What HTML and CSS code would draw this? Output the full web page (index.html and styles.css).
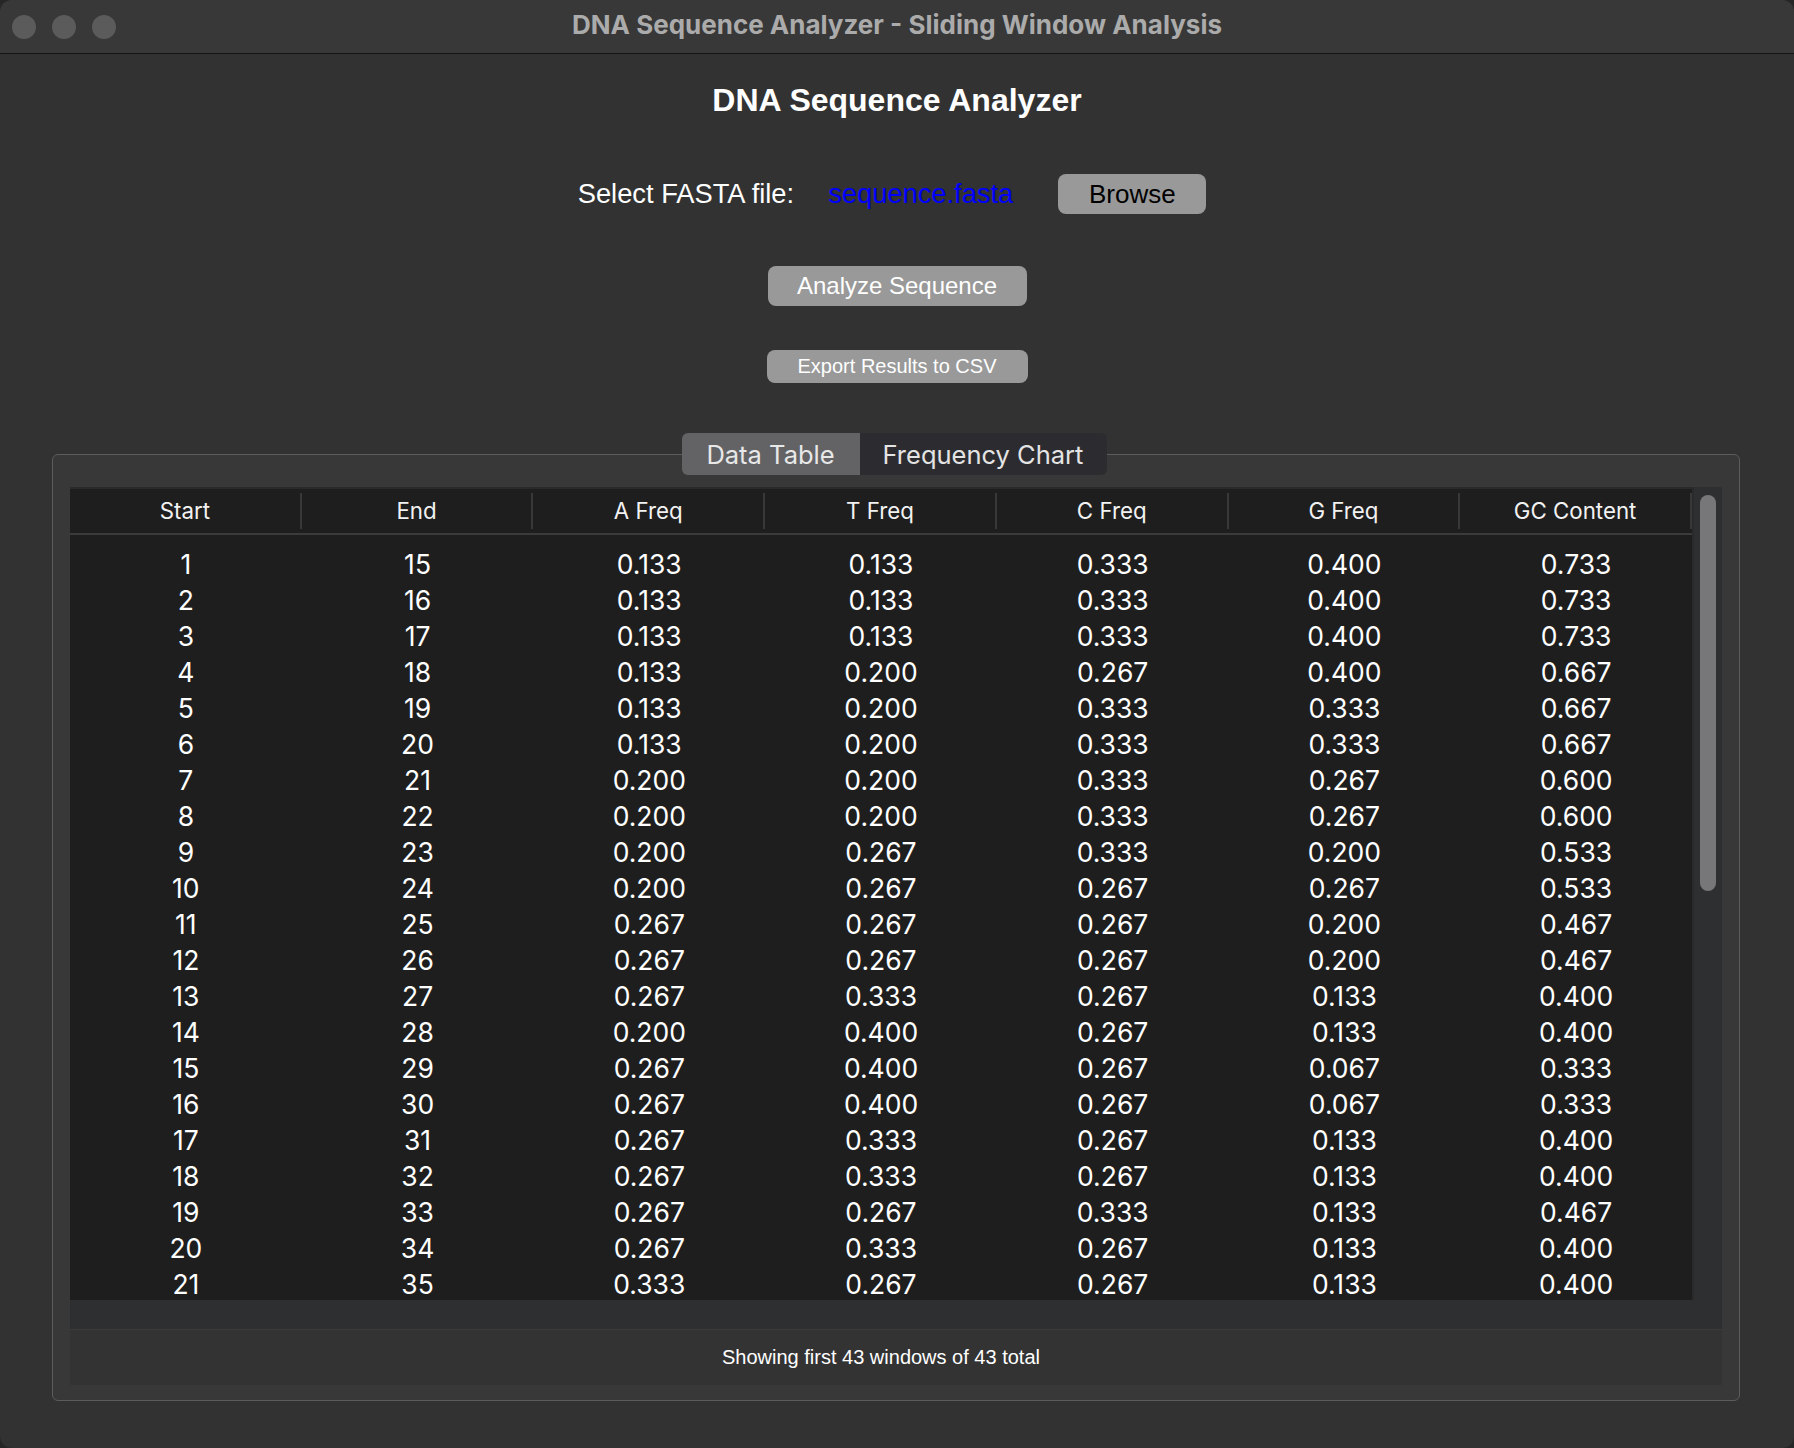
FILE: index.html
```html
<!DOCTYPE html>
<html>
<head>
<meta charset="utf-8">
<title>DNA Sequence Analyzer - Sliding Window Analysis</title>
<link rel="stylesheet" href="styles.css">
</head>
<body>
<div class="window">
  <div class="titlebar">
    <div class="lights"><span class="light"></span><span class="light"></span><span class="light"></span></div>
    <div class="wtitle">DNA Sequence Analyzer - Sliding Window Analysis</div>
    <div></div>
  </div>
  <div class="content">
    <h1 class="heading">DNA Sequence Analyzer</h1>
    <div class="filerow">
      <span class="lbl">Select FASTA file:</span>
      <span class="fname">sequence.fasta</span>
      <button class="btn browse">Browse</button>
    </div>
    <button class="btn analyze">Analyze Sequence</button>
    <button class="btn export">Export Results to CSV</button>
    <div class="notebook">
      <div class="tabs">
        <div class="tab active">Data Table</div>
        <div class="tab">Frequency Chart</div>
      </div>
      <div class="frame">
        <div class="treearea">
          <div class="tree">
            <div class="thead">
              <div class="th">Start</div><div class="th">End</div><div class="th">A Freq</div><div class="th">T Freq</div><div class="th">C Freq</div><div class="th">G Freq</div><div class="th">GC Content</div>
            </div>
            <div class="tbody" id="tbody"></div>
          </div>
          <div class="vscroll"><div class="thumb"></div></div>
        </div>
        <div class="hscroll"></div>
        <div class="status"><span class="statustext">Showing first 43 windows of 43 total</span></div>
      </div>
    </div>
  </div>
</div>
<script src="app.js"></script>
</body>
</html>
```

FILE: styles.css
```css
* { box-sizing: border-box; }
html, body { margin: 0; padding: 0; }
body {
  background: #262626;
  width: 1794px;
  height: 1448px;
  overflow: hidden;
}
.window {
  width: 1794px;
  height: 1448px;
  background: #323232;
  border-radius: 12px;
  overflow: hidden;
  display: flex;
  flex-direction: column;
}
.titlebar {
  height: 54px;
  flex: 0 0 54px;
  background: #383838;
  border-bottom: 1px solid #141414;
  display: grid;
  grid-template-columns: 1fr auto 1fr;
  align-items: center;
}
.lights {
  display: flex;
  gap: 16px;
  padding-left: 12px;
}
.light {
  width: 24px;
  height: 24px;
  border-radius: 50%;
  background: #5b5b5b;
}
.wtitle {
  font-family: Inter, "Liberation Sans", sans-serif;
  font-weight: 700;
  font-size: 26px;
  line-height: 30px;
  margin-bottom: 4px;
  color: #ababab;
  white-space: nowrap;
}
.content {
  display: flex;
  flex-direction: column;
  align-items: center;
}
.heading {
  margin: 28px 0 0 0;
  font-family: "Liberation Sans", Arial, sans-serif;
  font-weight: 700;
  font-size: 32px;
  line-height: 37px;
  color: #ffffff;
}
.filerow {
  margin-top: 55px;
  height: 40px;
  display: flex;
  align-items: center;
  font-family: "Liberation Sans", Arial, sans-serif;
  font-size: 27.3px;
  padding-right: 10px;
}
.lbl { color: #ffffff; }
.fname { color: #0000ff; margin-left: 34px; }
.btn {
  border: none;
  background: #999999;
  border-radius: 8px;
  font-family: "Liberation Sans", Arial, sans-serif;
  padding: 0;
  display: flex;
  align-items: center;
  justify-content: center;
}
.browse {
  margin-left: 45px;
  width: 148px;
  height: 40px;
  color: #000000;
  font-size: 26px;
}
.analyze {
  margin-top: 52px;
  width: 259px;
  height: 40px;
  color: #ffffff;
  font-size: 24px;
}
.export {
  margin-top: 44px;
  width: 261px;
  height: 33px;
  color: #ffffff;
  font-size: 20px;
}
.notebook {
  margin-top: 50px;
  align-self: stretch;
  padding: 0 54px 0 52px;
  display: flex;
  flex-direction: column;
  align-items: center;
}
.tabs {
  position: relative;
  z-index: 1;
  display: flex;
  height: 42px;
  margin-bottom: -21px;
  margin-left: -4px;
  border-radius: 6px;
  overflow: hidden;
  font-family: Inter, "Liberation Sans", sans-serif;
  font-size: 25.5px;
}
.tab {
  display: flex;
  align-items: center;
  justify-content: center;
  background: #2c2c30;
  color: #e4e4e4;
  width: 247px;
}
.tab.active {
  width: 178px;
  background: #636366;
  color: #e8e8e8;
}
.frame {
  align-self: stretch;
  background: #383838;
  border: 1px solid #5c5c5c;
  border-radius: 6px;
  padding: 32px 17px 15px 17px;
  display: flex;
  flex-direction: column;
}
.treearea {
  height: 813px;
  display: flex;
}
.tree {
  width: 1622px;
  background: #1e1e1e;
  border-top: 2px solid #2a2a2a;
  overflow: hidden;
  font-family: Inter, "Liberation Sans", sans-serif;
  color: #ffffff;
}
.thead {
  display: grid;
  grid-template-columns: repeat(7, 1fr);
  height: 46px;
  border-bottom: 2px solid #3b3b3b;
  align-items: center;
}
.th {
  text-align: center;
  font-size: 22.3px;
  color: #f2f2f2;
  height: 36px;
  line-height: 36px;
  border-right: 2px solid #383838;
}
.tbody {
  padding-top: 11px;
}
.row {
  display: grid;
  grid-template-columns: repeat(7, 1fr);
  height: 36px;
  align-items: center;
}
.td {
  text-align: center;
  font-size: 26.5px;
  line-height: 36px;
}
.vscroll {
  width: 30px;
  background: #2e2f31;
  border-left: 2px solid #2a2a2a;
  padding: 8px 6px 0 6px;
}
.thumb {
  width: 16px;
  height: 396px;
  border-radius: 8px;
  background: #77777a;
}
.hscroll {
  height: 30px;
  background: #2e2f31;
  border-bottom: 1px solid #3a3a3a;
}
.status {
  height: 55px;
  background: #333333;
  display: flex;
  align-items: center;
  padding-right: 30px;
  justify-content: center;
  font-family: "Liberation Sans", Arial, sans-serif;
  font-size: 20px;
  color: #ffffff;
}
```

FILE: app.js
```js
const data = [
[1,15,"0.133","0.133","0.333","0.400","0.733"],
[2,16,"0.133","0.133","0.333","0.400","0.733"],
[3,17,"0.133","0.133","0.333","0.400","0.733"],
[4,18,"0.133","0.200","0.267","0.400","0.667"],
[5,19,"0.133","0.200","0.333","0.333","0.667"],
[6,20,"0.133","0.200","0.333","0.333","0.667"],
[7,21,"0.200","0.200","0.333","0.267","0.600"],
[8,22,"0.200","0.200","0.333","0.267","0.600"],
[9,23,"0.200","0.267","0.333","0.200","0.533"],
[10,24,"0.200","0.267","0.267","0.267","0.533"],
[11,25,"0.267","0.267","0.267","0.200","0.467"],
[12,26,"0.267","0.267","0.267","0.200","0.467"],
[13,27,"0.267","0.333","0.267","0.133","0.400"],
[14,28,"0.200","0.400","0.267","0.133","0.400"],
[15,29,"0.267","0.400","0.267","0.067","0.333"],
[16,30,"0.267","0.400","0.267","0.067","0.333"],
[17,31,"0.267","0.333","0.267","0.133","0.400"],
[18,32,"0.267","0.333","0.267","0.133","0.400"],
[19,33,"0.267","0.267","0.333","0.133","0.467"],
[20,34,"0.267","0.333","0.267","0.133","0.400"],
[21,35,"0.333","0.267","0.267","0.133","0.400"]
];
const tbody = document.getElementById("tbody");
for (const r of data) {
  const row = document.createElement("div");
  row.className = "row";
  for (const v of r) {
    const c = document.createElement("div");
    c.className = "td";
    c.textContent = v;
    row.appendChild(c);
  }
  tbody.appendChild(row);
}
```
